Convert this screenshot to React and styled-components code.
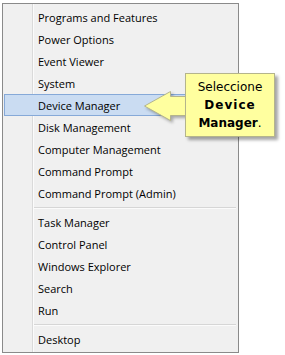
import React from "react";
import styled, { createGlobalStyle } from "styled-components";

const GlobalStyle = createGlobalStyle`
  html, body {
    margin: 0;
    padding: 0;
    background: #ffffff;
  }
`;

const Page = styled.div`
  position: relative;
  width: 285px;
  height: 355px;
  padding: 3px 0 0 2px;
  box-sizing: border-box;
`;

const Menu = styled.div`
  width: 237px;
  box-sizing: border-box;
  border: 1px solid #8a8a8a;
  padding: 2px 2px 2px 1px;
  display: flex;
  flex-direction: column;
  background:
    linear-gradient(to right, transparent 29px, #dadada 29px, #dadada 30px, #fbfbfb 30px, #fbfbfb 31px, transparent 31px),
    #f0f0f0;
  font-family: "Open Sans", "Noto Sans", sans-serif;
  font-size: 11px;
  color: #000;
`;

const Item = styled.div`
  height: 22px;
  box-sizing: border-box;
  display: flex;
  align-items: center;
  padding-left: 33px;
  border: 1px solid ${(p) => (p.$active ? "#86a9d8" : "transparent")};
  background: ${(p) => (p.$active ? "#cadcf2" : "transparent")};
  white-space: nowrap;
`;

const Separator = styled.div`
  height: 7px;
  margin-left: 30px;
  display: flex;
  align-items: center;

  &::after {
    content: "";
    flex: 1;
    height: 1px;
    background: #d6d6d6;
    box-shadow: 0 1px 0 #fbfbfb;
  }
`;

const Callout = styled.div`
  position: absolute;
  left: 185px;
  top: 73px;
  width: 90px;
  height: 64px;
  box-sizing: border-box;
  padding-top: 4px;
  background: #ffff9f;
  border: 1px solid #b4b48c;
  box-shadow: 3px 3px 3px rgba(0, 0, 0, 0.35);
  font-family: "DejaVu Sans", Verdana, sans-serif;
  font-size: 12px;
  line-height: 18px;
  text-align: center;
  color: #000;
`;

const Strong = styled.span`
  font-weight: bold;
  letter-spacing: ${(p) => p.$spacing || "0"};
`;

const Arrow = styled.svg`
  position: absolute;
  left: 143px;
  top: 89px;
  overflow: visible;
  filter: drop-shadow(2px 2px 1.5px rgba(0, 0, 0, 0.3));
`;

const groups = [
  [
    "Programs and Features",
    "Power Options",
    "Event Viewer",
    "System",
    "Device Manager",
    "Disk Management",
    "Computer Management",
    "Command Prompt",
    "Command Prompt (Admin)",
  ],
  ["Task Manager", "Control Panel", "Windows Explorer", "Search", "Run"],
  ["Desktop"],
];

export default function App() {
  return (
    <Page>
      <GlobalStyle />
      <Menu>
        {groups.map((group, gi) => (
          <React.Fragment key={gi}>
            {gi > 0 && <Separator />}
            {group.map((label) => (
              <Item key={label} $active={label === "Device Manager"}>
                {label}
              </Item>
            ))}
          </React.Fragment>
        ))}
      </Menu>
      <Arrow width="46" height="34" viewBox="0 0 46 34">
        <path
          d="M45 7.5 L27.5 7.5 L27.5 2.5 L1.5 17 L27.5 31.5 L27.5 26.5 L45 26.5"
          fill="#ffff9f"
          stroke="#b4b48c"
          strokeWidth="1"
        />
      </Arrow>
      <Callout>
        Seleccione
        <br />
        <Strong $spacing="1px">Device</Strong>
        <br />
        <Strong>Manager</Strong>.
      </Callout>
    </Page>
  );
}
